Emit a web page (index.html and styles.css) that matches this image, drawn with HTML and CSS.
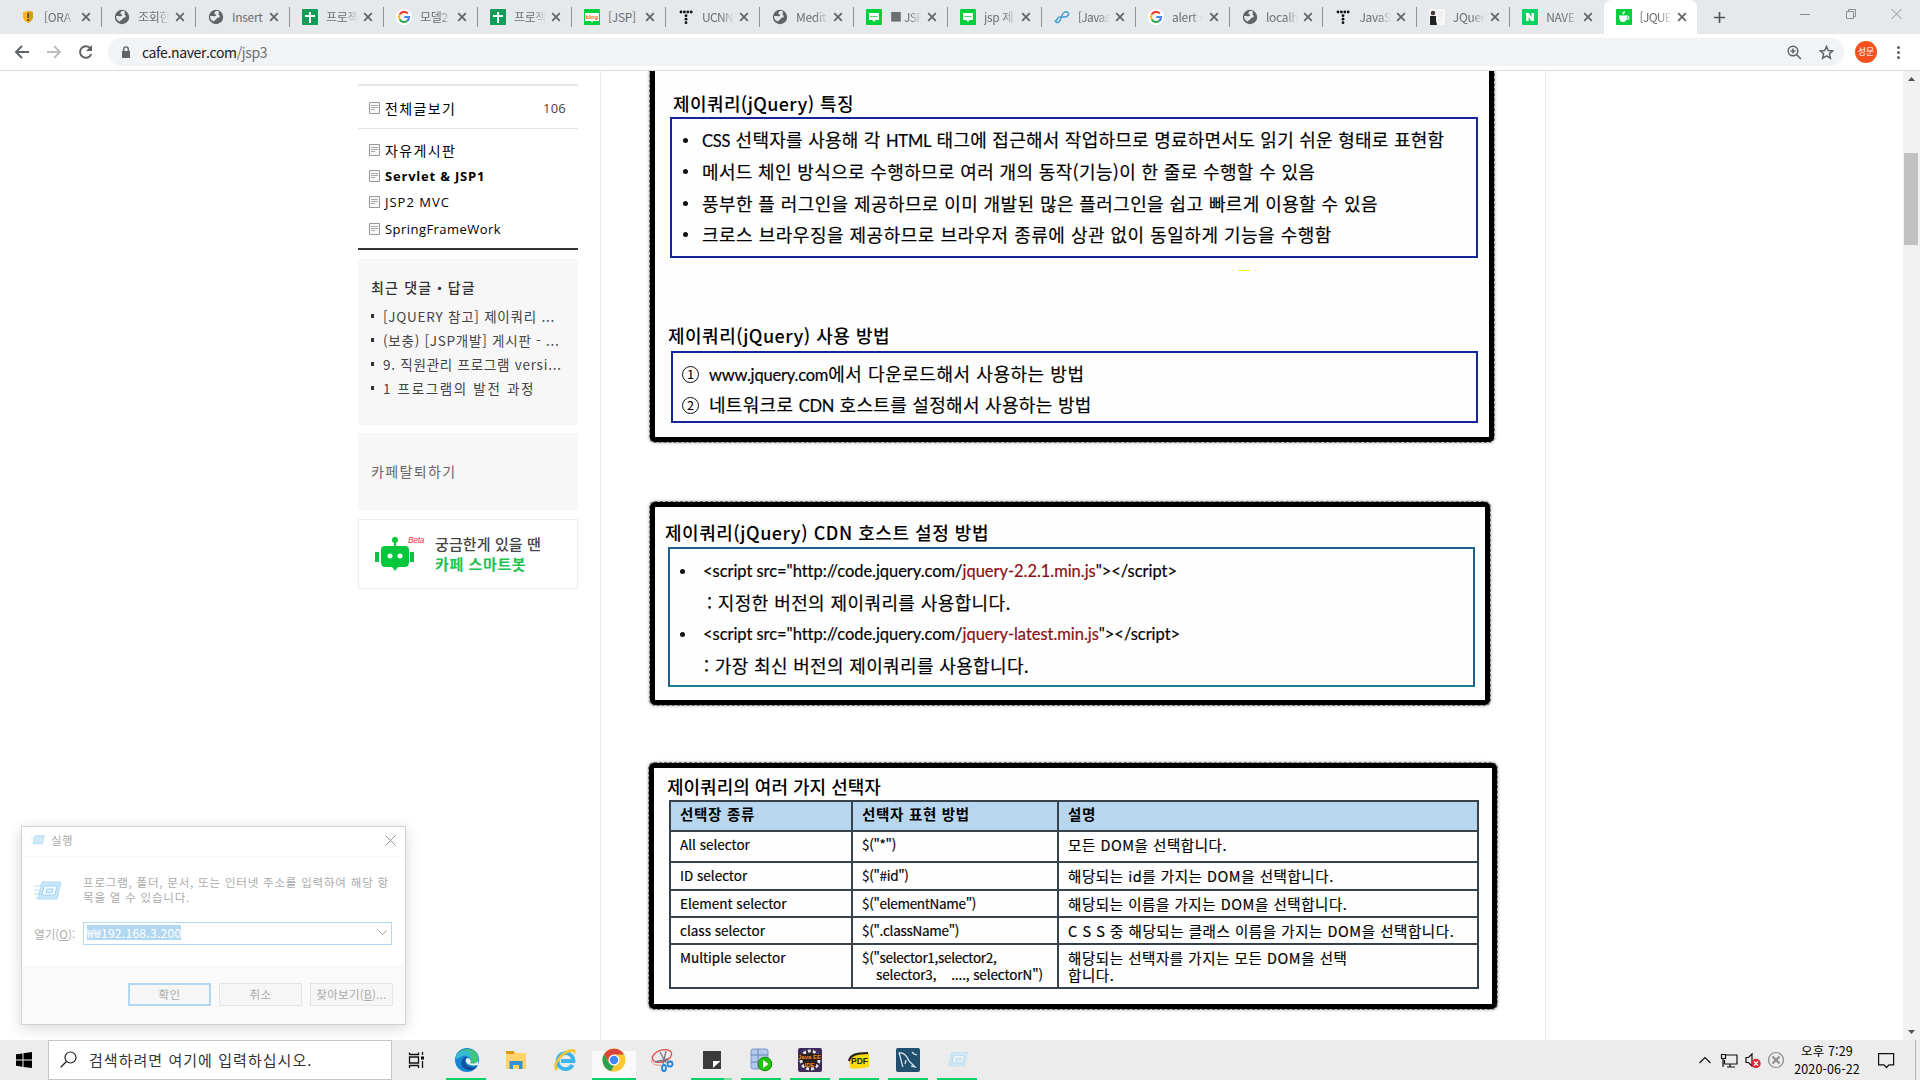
FILE: index.html
```html
<!DOCTYPE html>
<html lang="ko">
<head>
<meta charset="utf-8">
<title>[JQUERY 참고] 제이쿼리</title>
<link rel="stylesheet" href="styles.css">
</head>
<body>
<svg class="defs" aria-hidden="true">
  <symbol id="globe" viewBox="0 0 16 16"><circle cx="8" cy="8" r="7.2" fill="#5f6368"/><path d="M8.5 1.8C6 3 5.6 4.8 7.400 5.600C9 6.200 8.200 7.300 6.300 7.200C4.500 7.300 3.200 6.800 2 7.400C2.100 10.300 4.300 12 6 12.500C6.400 11 8.400 11.200 8.600 9.800C8.800 8.300 11 9 11.800 7.700C12.200 6.600 10.500 6.300 10.600 4.800C10.700 3.600 11 3 11.200 2.700C10.400 2.100 9.400 1.800 8.500 1.800Z" fill="#e6e9ec"/></symbol>
  <symbol id="sheet" viewBox="0 0 16 16"><rect width="16" height="16" rx="1" fill="#0f9d58"/><path d="M7 3h2v3h4v2H9v6H7V8H3V6h4z" fill="#fff"/></symbol>
  <symbol id="google" viewBox="0 0 16 16"><circle cx="8" cy="8" r="8" fill="#fff"/><g fill="none" stroke-width="2.200"><path d="M11.800 4.500A5 5 0 0 0 3.700 5.600" stroke="#ea4335"/><path d="M3.700 5.600A5 5 0 0 0 3.700 10.500" stroke="#fbbc05"/><path d="M3.700 10.500A5 5 0 0 0 11.300 11.800" stroke="#34a853"/><path d="M11.300 11.800A5 5 0 0 0 13 8H8.200" stroke="#4285f4"/></g></symbol>
  <symbol id="tistory" viewBox="0 0 16 16"><g fill="#111"><circle cx="3" cy="3" r="1.400"/><circle cx="6.400" cy="3" r="1.400"/><circle cx="9.800" cy="3" r="1.400"/><circle cx="13.200" cy="3" r="1.400"/><circle cx="8" cy="6.700" r="1.400"/><circle cx="8" cy="10.200" r="1.400"/><circle cx="8" cy="13.700" r="1.400"/></g></symbol>
  <symbol id="chat" viewBox="0 0 16 16"><rect width="16" height="16" rx="1" fill="#03cf3d"/><path d="M3 4h10v7H9.500L8 13 6.500 11H3z" fill="#fff"/><path d="M4.500 7.500h7" stroke="#03cf3d" stroke-dasharray="1.400 .5"/></symbol>
  <symbol id="x" viewBox="0 0 10 10"><path d="M1.200 1.200l7.600 7.600M8.800 1.200L1.200 8.800" stroke="#5f6368" stroke-width="1.700"/></symbol>
  <symbol id="doc" viewBox="0 0 11 12"><path d="M.5.5h10v11H.5z" fill="#f8f8f8" stroke="#999"/><path d="M2 3.500h7M2 5.500h7M2 7.500h4" stroke="#aaa"/></symbol>
  <symbol id="run" viewBox="0 0 28 20"><path d="M0 5h8M0 9h7M0 13h6M1 17h6" stroke="#d5ecfa" stroke-width="1.500"/><path d="M8 1h19l-4 17H4z" fill="#c9e7f9" stroke="#b0d8f1"/><path d="M10 5h13l-2 9H8z" fill="#f2faff" stroke="#a6d2ef"/><path d="M13 8h6l-.8 3.500h-6z" fill="#d9effb" stroke="#a6d2ef"/></symbol>
</svg>

<header class="tabs">
  <div class="tab"><svg class="fav"><path d="M8 2l5 1v6l-2 3-3 2-3-2-2-3V3z" fill="#fbb616"/><path d="M8 2l5 1v6l-2 3-3 2z" fill="#d99a18"/><path d="M7.300 4h1.500v5H7.300zM7.300 10h1.500v2H7.300z" fill="#47413a"/></svg><span>[ORA</span><svg class="cl"><use href="#x"/></svg></div>
  <div class="tab"><svg class="fav"><use href="#globe"/></svg><span>조회한</span><svg class="cl"><use href="#x"/></svg></div>
  <div class="tab"><svg class="fav"><use href="#globe"/></svg><span class="solid">Insert</span><svg class="cl"><use href="#x"/></svg></div>
  <div class="tab"><svg class="fav"><use href="#sheet"/></svg><span>프로젝</span><svg class="cl"><use href="#x"/></svg></div>
  <div class="tab"><svg class="fav"><use href="#google"/></svg><span>모델2</span><svg class="cl"><use href="#x"/></svg></div>
  <div class="tab"><svg class="fav"><use href="#sheet"/></svg><span>프로젝</span><svg class="cl"><use href="#x"/></svg></div>
  <div class="tab"><svg class="fav"><rect width="16" height="16" rx="1" fill="#03cf3d"/><path d="M1 4h14v8H9l-1 2-1-2H1z" fill="#fff"/><text x="1.500" y="9.800" class="blog">blog</text></svg><span class="solid">[JSP]</span><svg class="cl"><use href="#x"/></svg></div>
  <div class="tab"><svg class="fav"><use href="#tistory"/></svg><span class="tight">UCNN</span><svg class="cl"><use href="#x"/></svg></div>
  <div class="tab"><svg class="fav"><use href="#globe"/></svg><span>Medit</span><svg class="cl"><use href="#x"/></svg></div>
  <div class="tab"><svg class="fav"><use href="#chat"/></svg><span class="tight">■ JSP</span><svg class="cl"><use href="#x"/></svg></div>
  <div class="tab"><svg class="fav"><use href="#chat"/></svg><span>jsp 제</span><svg class="cl"><use href="#x"/></svg></div>
  <div class="tab"><svg class="fav"><path d="M1.500 12.500c2 2.500 4.500.5 5.500-3.500s3-7 6-6 1.500 5-2.500 5-6.500-1-7 1.500-3 2-2 3z" fill="none" stroke="#3f9cd4" stroke-width="1.400"/></svg><span class="tight">[Javas</span><svg class="cl"><use href="#x"/></svg></div>
  <div class="tab"><svg class="fav"><use href="#google"/></svg><span>alert -</span><svg class="cl"><use href="#x"/></svg></div>
  <div class="tab"><svg class="fav"><use href="#globe"/></svg><span>localh</span><svg class="cl"><use href="#x"/></svg></div>
  <div class="tab"><svg class="fav"><use href="#tistory"/></svg><span>JavaS</span><svg class="cl"><use href="#x"/></svg></div>
  <div class="tab"><svg class="fav"><rect width="16" height="16" fill="#f7f7f7"/><circle cx="4" cy="4" r="2.300" fill="#4a3a35"/><path d="M1 7h6v4l1 5H1z" fill="#222"/><path d="M9 4h5M9 7h4M9 11h3" stroke="#ddd"/></svg><span>JQuer</span><svg class="cl"><use href="#x"/></svg></div>
  <div class="tab last"><svg class="fav"><rect width="16" height="16" rx="1" fill="#06d460"/><path d="M4 12V4h2.700L9.500 8V4H12v8H9.400L6.600 8v4z" fill="#fff"/></svg><span>NAVE</span><svg class="cl"><use href="#x"/></svg></div>
  <div class="tab active"><svg class="fav"><rect width="16" height="16" rx="1" fill="#03cf3d"/><path d="M3 6.500h8c0 4-1 6.500-4 6.500s-4-2.500-4-6.500z" fill="#fff"/><circle cx="11.300" cy="8.600" r="1.600" fill="none" stroke="#fff" stroke-width="1.200"/><path d="M7 5.500c0-1.500.5-2.500 2-2.500" fill="none" stroke="#fff" stroke-width="1.300"/></svg><span class="tight">[JQUE</span><svg class="cl"><use href="#x"/></svg></div>
  <svg class="plus" viewBox="0 0 14 14"><path d="M7 1v12M1 7h12" stroke="#50545a" stroke-width="1.800"/></svg>
  <svg class="winctl" viewBox="0 0 102 12"><path d="M0 6.500h10M46.500 3.500h7v7h-7zM48.500 3.500v-2h7v7h-2M91.500 1l10 10M101.500 1l-10 10" fill="none" stroke="#8a8d91"/></svg>
</header>

<div class="toolbar">
  <svg class="nav" viewBox="0 0 80 16"><g fill="none" stroke-width="2"><path d="M15 8H2M8 2L2 8l6 6" stroke="#5f6368"/><path d="M33 8h13M40 2l6 6-6 6" stroke="#bbbec1"/><path d="M76.500 4.500A5.800 5.800 0 1 0 77.300 10" stroke="#5f6368"/></g><path d="M78 1v6h-6z" fill="#5f6368"/></svg>
  <div class="omni">
    <svg class="lock" viewBox="0 0 10 13"><path d="M1 5h8v7H1z" fill="#5f6368"/><path d="M2.700 5V3.200a2.300 2.300 0 0 1 4.600 0V5" fill="none" stroke="#5f6368" stroke-width="1.400"/></svg>
    <span class="url">cafe.naver.com<i>/jsp3</i></span>
    <svg class="omi" viewBox="0 0 15 15"><g fill="none" stroke="#5f6368" stroke-width="1.500"><circle cx="6" cy="6" r="4.800"/><path d="M9.500 9.500l4.500 4.500M3.500 6h5M6 3.500v5"/></g></svg>
    <svg class="omi" viewBox="0 0 15 15"><path d="M7.500 1.500l1.800 4 4.400.4-3.300 2.900 1 4.300-3.900-2.300-3.900 2.300 1-4.300L1.300 5.900l4.400-.4z" fill="none" stroke="#5f6368" stroke-width="1.500"/></svg>
  </div>
  <span class="avatar">성문</span>
  <span class="dots"></span>
</div>

<main class="page">
  <aside class="side">
    <div class="all"><svg class="doc"><use href="#doc"/></svg><span>전체글보기</span><em>106</em></div>
    <ul class="menu">
      <li><svg class="doc"><use href="#doc"/></svg><span>자유게시판</span></li>
      <li><svg class="doc"><use href="#doc"/></svg><b>Servlet &amp; JSP1</b></li>
      <li><svg class="doc"><use href="#doc"/></svg><span class="lat wide">JSP2 MVC</span></li>
      <li><svg class="doc"><use href="#doc"/></svg><span class="lat">SpringFrameWork</span></li>
    </ul>
    <section class="recent">
      <h3>최근 댓글・답글</h3>
      <ul><li>[JQUERY 참고] 제이쿼리 ...</li><li>(보충) [JSP개발] 게시판 - ...</li><li>9. 직원관리 프로그램 versi...</li><li class="r4">1 프로그램의 발전 과정</li></ul>
    </section>
    <section class="leave">카페탈퇴하기</section>
    <section class="bot">
      <svg class="robot" viewBox="0 0 52 38"><g fill="#03c83c"><circle cx="21" cy="5" r="3"/><path d="M20 6h2v6h-2zM1 17h4v10H1zM36 17h4v10h-4z"/><path d="M11 11h20q4 0 4 4v12q0 5-4 5h-7l-3 4-3-4h-7q-4 0-4-5V15q0-4 4-4z"/></g><circle cx="16" cy="21" r="2.500" fill="#fff"/><circle cx="26" cy="21" r="2.500" fill="#fff"/><text x="34" y="8" class="beta">Beta</text></svg>
      <p>궁금한게 있을 땐<strong>카페 스마트봇</strong></p>
    </section>
  </aside>

  <article class="post">
    <section class="slide s1">
      <h2 class="h-a">제이쿼리(jQuery) 특징</h2>
      <ul class="box b1">
        <li class="l1"><p><span class="la">CSS</span> 선택자를 사용해 각 <span class="la">HTML</span> 태그에 접근해서 작업하므로 명료하면서도 읽기 쉬운 형태로 표현함</p></li>
        <li class="l2"><p>메서드 체인 방식으로 수행하므로 여러 개의 동작(기능)이 한 줄로 수행할 수 있음</p></li>
        <li class="l3"><p>풍부한 플 러그인을 제공하므로 이미 개발된 많은 플러그인을 쉽고 빠르게 이용할 수 있음</p></li>
        <li class="l4"><p>크로스 브라우징을 제공하므로 브라우저 종류에 상관 없이 동일하게 기능을 수행함</p></li>
      </ul>
      <i class="spot"></i>
      <h2 class="h-b">제이쿼리(jQuery) 사용 방법</h2>
      <ol class="box b2">
        <li class="l5"><i>1</i><p><span class="la">www.jquery.com</span>에서 다운로드해서 사용하는 방법</p></li>
        <li class="l6"><i>2</i><p>네트워크로 <span class="la">CDN</span> 호스트를 설정해서 사용하는 방법</p></li>
      </ol>
    </section>

    <section class="slide s2">
      <h2 class="h-c">제이쿼리(jQuery) CDN 호스트 설정 방법</h2>
      <ul class="box b3">
        <li class="code"><p>&lt;script src="http://code.jquery.com/<mark>jquery-2.2.1.min.js</mark>"&gt;&lt;/script&gt;</p></li>
        <li class="note n1"><p>: 지정한 버전의 제이쿼리를 사용합니다.</p></li>
        <li class="code"><p>&lt;script src="http://code.jquery.com/<mark>jquery-latest.min.js</mark>"&gt;&lt;/script&gt;</p></li>
        <li class="note n2"><p>: 가장 최신 버전의 제이쿼리를 사용합니다.</p></li>
      </ul>
    </section>

    <section class="slide s3">
      <h2 class="h-d">제이쿼리의 여러 가지 선택자</h2>
      <table>
        <colgroup><col class="c1"><col class="c2"><col class="c3"></colgroup>
        <tr class="r30"><th>선택장 종류</th><th>선택자 표현 방법</th><th>설명</th></tr>
        <tr class="r31"><td>All selector</td><td>$("*")</td><td>모든 DOM을 선택합니다.</td></tr>
        <tr class="r28"><td>ID selector</td><td>$("#id")</td><td>해당되는 id를 가지는 DOM을 선택합니다.</td></tr>
        <tr class="r27"><td>Element selector</td><td>$("elementName")</td><td>해당되는 이름을 가지는 DOM을 선택합니다.</td></tr>
        <tr class="r27"><td>class selector</td><td>$(".className")</td><td>C S S 중 해당되는 클래스 이름을 가지는 DOM을 선택합니다.</td></tr>
        <tr class="r44"><td>Multiple selector</td><td>$("selector1,selector2,<br><span class="ind">selector3, &nbsp; &nbsp;...., selectorN")</span></td><td>해당되는 선택자를 가지는 모든 DOM을 선택<br>합니다.</td></tr>
      </table>
    </section>
  </article>

  <div class="scroll"><svg viewBox="0 0 17 17"><path d="M5 10h7L8.500 6z" fill="#505050"/></svg><i></i><svg viewBox="0 0 17 17"><path d="M5 7h7l-3.500 4z" fill="#505050"/></svg></div>

  <div class="dialog">
    <div class="dt"><svg class="ri"><use href="#run"/></svg><span>실행</span><svg class="dx" viewBox="0 0 11 11"><path d="M.5.5l10 10M10.500.5l-10 10" stroke="#999"/></svg></div>
    <div class="db">
      <div class="dmsg"><svg class="rb"><use href="#run"/></svg><p>프로그램, 폴더, 문서, 또는 인터넷 주소를 입력하여 해당 항<br>목을 열 수 있습니다.</p></div>
      <div class="dopen"><label>열기(<u>O</u>):</label><div class="combo"><span>₩₩192.168.3.200</span><svg viewBox="0 0 9 6"><path d="M.5.5l4 4 4-4" fill="none" stroke="#999"/></svg></div></div>
    </div>
    <div class="df"><button class="ok">확인</button><button>취소</button><button>찾아보기(<u>B</u>)...</button></div>
  </div>
</main>

<footer class="taskbar">
  <div class="start"><svg viewBox="0 0 16 16"><path d="M0 2.300L6.500 1.400V7.500H0zM7.500 1.200L16 0v7.500H7.500zM0 8.500h6.500v6.200L0 13.800zM7.500 8.500H16V16l-8.500-1.100z"/></svg></div>
  <div class="search"><svg viewBox="0 0 17 17"><circle cx="10.500" cy="6.500" r="5.500" fill="none" stroke="#222" stroke-width="1.200"/><path d="M6.500 10.500L.7 16.300" stroke="#222" stroke-width="1.300"/></svg><span>검색하려면 여기에 입력하십시오.</span></div>
  <div class="task tv"><svg viewBox="0 0 18 18"><path d="M2.500 4V1.500M2.500 3.500h9V1.500M2.500 14.500h9v2.500M2.500 14v3M2.500 6h9v6h-9zM15.500 1v3M15.500 10v7" fill="none" stroke="#111" stroke-width="1.300"/><path d="M14 5.500h3v3h-3z"/></svg></div>
  <div class="task on"><svg viewBox="0 0 24 24"><circle cx="12" cy="12" r="12" fill="#1685d3"/><path d="M1 9C3 0 19-3 23 8c2 6-3 9-8 7 2-4 0-8-5-8C5 7 2 8 1 9z" fill="#40c67c"/><path d="M1 9c2-5 7-7 12-6 3 2 3 6 2 8-1-3-4-4-7-3-4 1-6 5-7 1z" fill="#36bbd5"/><path d="M10 9c-6 4-4 12 3 13 4 1 8-1 9-4-5 3-12 0-12-5 0-2 1-3 3-4z" fill="#104f9e"/><path d="M12 10c-4 4 2 9 11 7v-4c-2 3-6 3-8 2 2-2 0-5-3-5z" fill="#eaf5ef"/></svg></div>
  <div class="task"><svg viewBox="0 0 24 24"><path d="M2 3h8l2 2h10v16H2z" fill="#ffd367"/><path d="M2 3h8v3H2z" fill="#d99a10"/><path d="M5.500 21v-8h13v8H15v-4H9v4z" fill="#3490d4"/></svg></div>
  <div class="task"><svg viewBox="0 0 24 24"><path d="M19.500 17A8 8 0 1 1 20.500 13H8" fill="none" stroke="#3db5ea" stroke-width="3.800"/><path d="M3 22.500C-3 18 8 1.500 20 1c3.500 0 3 3.500 1.500 6.500C22 2 17 3 12 6.500 6 11 1 18.500 5.500 20.500z" fill="#f4c430"/></svg></div>
  <div class="task on cur"><svg viewBox="0 0 24 24"><circle cx="12" cy="12" r="11.500" fill="#fcc934"/><path d="M2 6.500A11.500 11.500 0 0 1 22 6.500H12L7 14z" fill="#d9453a"/><path d="M2 6.300l5 8.700 5 2.500-3 5.600A11.500 11.500 0 0 1 2 6.300z" fill="#2da04f"/><circle cx="12" cy="12" r="5.500" fill="#fff"/><circle cx="12" cy="12" r="4.200" fill="#4285f4"/></svg></div>
  <div class="task"><svg viewBox="0 0 24 24"><ellipse cx="11" cy="8" rx="10" ry="5.800" fill="none" stroke="#e24b4b" stroke-width="1.300" transform="rotate(-18 11 8)"/><path d="M9 4l6 11M15 3l-3 13M4 14l13-3" stroke="#778" stroke-width="1.300"/><ellipse cx="13" cy="20" rx="2" ry="3" fill="none" stroke="#2781cf" stroke-width="1.800"/><circle cx="19" cy="16" r="2.500" fill="none" stroke="#2781cf" stroke-width="1.800"/><path d="M0 12c1 4 5 6 10 5" stroke="#e88" fill="none"/></svg></div>
  <div class="task on part"><svg viewBox="0 0 24 24"><path d="M3 3h18v18H3z" fill="#3b3b3b"/><path d="M13 20v-7h7.500z" fill="#fff"/></svg></div>
  <div class="task on"><svg viewBox="0 0 24 24"><rect x="2" y="1" width="17" height="20" rx="2" fill="#b0c9ec" stroke="#7d9bcb"/><path d="M2 7h17M2 14h17M9 1v20" stroke="#6986b8"/><circle cx="16" cy="16" r="6.800" fill="#1fc40b" stroke="#138305"/><path d="M14 12l5.500 4-5.500 4z" fill="#fff"/></svg></div>
  <div class="task on"><svg viewBox="0 0 24 24"><rect width="24" height="24" rx="2" fill="#3c2b58"/><circle cx="12" cy="12" r="9" fill="#2b2020" stroke="#ddd" stroke-width="3" stroke-dasharray="3 2"/><path d="M1 6h22v6H1zM6 12h12v6H6z" fill="#2b2020"/><text x="0" y="10.500" class="ee">Java EE</text><text x="6.500" y="18.500" class="ee">IDE</text></svg></div>
  <div class="task on"><svg viewBox="0 0 24 24"><path d="M2 12C4 5 9 4 22 5v14c-9 2-15 2-19 1z" fill="#fcd90b"/><path d="M2 13C3 7 9 5 21 5" fill="none" stroke="#222" stroke-width="2"/><text x="4" y="16" class="pdf">PDF</text></svg></div>
  <div class="task on"><svg viewBox="0 0 24 24"><rect width="24" height="24" rx="2" fill="#21506f"/><path d="M7 19C5 15 5 9 3 5c5-1 8 3 10 8l6 6-4-1M9 16l1-4M16 4l2 2 3 1" fill="none" stroke="#e4f0f5" stroke-width="1.200"/></svg></div>
  <div class="task on"><svg viewBox="0 0 28 28"><use href="#run" width="26" height="19" x="1" y="4" opacity=".8"/></svg></div>
  <div class="tray">
    <svg class="t1" viewBox="0 0 86 20"><g fill="none" stroke="#111" stroke-width="1.200"><path d="M.5 13L6 7.500 11.500 13"/><path d="M26 5h12v9H25.500v-4M31 14v3M28 17h8M22.500 4.500h4v4h-4zM24 9v8"/><path d="M47 7.500h2.500L53 4v12l-3.500-3.500H47z"/></g><circle cx="57" cy="13.500" r="4.700" fill="#dd2635"/><path d="M55 11.500l4 4M59 11.500l-4 4" stroke="#fff" stroke-width="1.300"/><circle cx="77" cy="10" r="7.500" fill="none" stroke="#8b8b8b" stroke-width="1.200"/><path d="M73.500 6.500l7 7M80.500 6.500l-7 7" stroke="#8b8b8b" stroke-width="2"/></svg>
    <div class="clock"><span>오후 7:29</span><span>2020-06-22</span></div>
    <svg class="note-i" viewBox="0 0 17 17"><path d="M.6 1.600h15v11.200H11L8.500 15.500 6 12.800H.6z" fill="none" stroke="#111" stroke-width="1.200"/></svg>
  </div>
</footer>
</body>
</html>
```
FILE: styles.css
```css
* { box-sizing: border-box; }
html, body { margin: 0; height: 100%; overflow: hidden; }
body { display: flex; flex-direction: column; background: #fff; color: #000; font: 13px "Open Sans", "Noto Sans CJK KR", sans-serif; }
ul, ol, p, h2, h3 { margin: 0; padding: 0; list-style: none; }
svg { flex: none; display: block; }
i, em { font-style: normal; }
.defs { width: 0; height: 0; position: absolute; }

/* tab strip */
.tabs { height: 34px; flex: none; display: flex; align-items: center; background: #e6e9ec; padding-left: 8px; }
.tab { width: 94px; height: 34px; flex: none; display: flex; align-items: center; padding-left: 12px; position: relative; color: #6b6f73; }
.tab:nth-child(n+14) { width: 93.400px; }
.tab::after { content: ""; position: absolute; right: 0; top: 7px; height: 20px; border-right: 1px solid #8f9296; }
.tab.last::after, .tab.active::after { display: none; }
.tab.active { background: #fff; border-radius: 8px 8px 0 0; }
.fav { width: 16px; height: 16px; }
.tab span { width: 32px; margin: 0 5px 0 8px; overflow: hidden; white-space: nowrap; font: 12px/18px "Noto Sans CJK KR", sans-serif; letter-spacing: -.3px; -webkit-mask-image: linear-gradient(90deg, #000 60%, transparent); mask-image: linear-gradient(90deg, #000 60%, transparent); }
.tab .solid { -webkit-mask-image: none; mask-image: none; }
.tab .tight { letter-spacing: -.7px; }
.cl { width: 10px; height: 10px; }
.blog { font: bold 6px "Liberation Sans", sans-serif; fill: #f60; }
.plus { width: 13px; height: 13px; margin-left: 16px; }
.winctl { width: 102px; height: 12px; margin: -6px 18px 0 auto; }

/* toolbar */
.toolbar { height: 37px; flex: none; display: flex; align-items: center; padding-left: 14px; border-bottom: 1px solid #d9dadc; }
.nav { width: 80px; height: 16px; }
.omni { margin-left: 14px; width: 1736px; height: 28px; border-radius: 14px; background: #f1f3f4; display: flex; align-items: center; padding: 0 10px 0 13px; }
.lock { width: 10px; height: 13px; }
.url { margin: 0 auto 0 11px; font: 14px "Noto Sans CJK KR", sans-serif; letter-spacing: -.38px; color: #202124; }
.url i { color: #6b6f73; }
.omi { width: 15px; height: 15px; margin-left: 17px; }
.avatar { width: 22px; height: 22px; margin-left: 11px; border-radius: 50%; background: #f4511e; color: #fff; font: 9px/21px "Noto Sans CJK KR", sans-serif; text-align: center; }
.dots { width: 3px; height: 3px; margin-left: 20px; border-radius: 50%; background: #5f6368; box-shadow: 0 -5px #5f6368, 0 5px #5f6368; }

/* page */
.page { height: 969px; flex: none; display: flex; position: relative; overflow: hidden; padding-left: 358px; }
.side { width: 220px; flex: none; padding-top: 13px; font-family: "Noto Sans CJK KR", sans-serif; font-size: 14px; letter-spacing: 1.350px; }
.all { height: 45px; display: flex; align-items: center; border-top: 2px solid #e5e5e5; border-bottom: 1px solid #e5e5e5; padding: 2px 12px 0 11px; }
.all em { margin-left: auto; color: #444; font: 13px "Open Sans", sans-serif; letter-spacing: .2px; }
.doc { width: 11px; height: 12px; margin-right: 5px; }
.menu { height: 121px; border-bottom: 2px solid #333; padding: 8px 11px 0; }
.menu li { height: 26.200px; display: flex; align-items: center; }
.menu b { font: bold 13px "Open Sans", sans-serif; letter-spacing: .8px; }
.lat { font: 13px "Open Sans", sans-serif; letter-spacing: .45px; }
.wide { letter-spacing: 1px; }
.recent { margin-top: 9px; height: 166px; background: #f7f7f7; padding: 17px 0 0 13px; }
.recent h3 { font-size: 14px; line-height: 23px; font-weight: 500; color: #333; letter-spacing: 1.200px; }
.recent ul { padding-top: 5px; color: #444; font: 13.500px "Noto Sans CJK KR", sans-serif; letter-spacing: .75px; }
.recent .r4 { letter-spacing: 1.650px; }
.recent li { height: 24px; line-height: 24px; display: flex; align-items: center; white-space: nowrap; }
.recent li::before { content: ""; width: 3px; height: 4px; margin-right: 9px; background: #333; }
.leave { margin-top: 8px; height: 77px; line-height: 77px; background: #f7f7f7; padding-left: 13px; color: #666; }
.bot { margin-top: 9px; height: 70px; border: 1px solid #eee; display: flex; align-items: center; padding-left: 15px; }
.robot { width: 52px; height: 38px; }
.beta { font: italic 8.500px "Liberation Sans", sans-serif; fill: #f0364a; letter-spacing: -.3px; }
.bot p { margin-left: 9px; font-size: 15px; line-height: 20px; font-weight: 500; letter-spacing: .1px; color: #444; }
.bot strong { display: block; color: #1ec252; letter-spacing: .6px; }

.post { width: 946px; flex: none; margin-left: 22px; border: solid #e9e9ee; border-width: 0 1px; padding-left: 49px; font-family: "Noto Sans CJK KR", sans-serif; }
.slide { position: relative; border: 5px solid #000; border-radius: 5px; background: #fefefe; box-shadow: 0 0 3px 1px rgba(0,0,0,.3); }
.slide::before { content: ""; position: absolute; inset: -6px; border: 1px dashed rgba(20,20,20,.5); border-radius: 6px; }
.slide h2 { font-size: 18px; line-height: 26px; font-weight: 500; white-space: nowrap; }
.box { border: 2px solid #14259c; font-size: 18px; white-space: nowrap; -webkit-text-stroke: .2px #111; }
.box li { height: 31.300px; line-height: 31.300px; display: flex; align-items: center; }
.box li::before { content: ""; flex: none; width: 5px; height: 5px; border-radius: 50%; background: #111; margin: 0 14px 0 11px; }
.la { font-family: Lato, sans-serif; font-size: 16.500px; letter-spacing: -.2px; }

.s1 { width: 844px; height: 371px; border-top: 0; border-radius: 0 0 5px 5px; padding: 19px 0 0 15px; }
.h-a { padding-left: 3px; letter-spacing: .4px; }
.b1 { width: 808px; height: 141px; padding-top: 6px; margin-top: 1px; }
.h-b { margin-top: 64px; margin-left: -2px; letter-spacing: .5px; }
.b2 { width: 807px; height: 72px; margin: 3px 0 0 1px; padding-top: 6px; }
.b2 li { height: 31px; }
.b2 li::before { display: none; }
.b2 i { width: 17px; height: 17px; border: 1.500px solid #111; border-radius: 50%; margin: 0 10px 0 9px; font-size: 12px; line-height: 14px; text-align: center; letter-spacing: 0; }
.spot { position: absolute; left: 583px; top: 199px; width: 12px; height: 1px; background: #ff0; }
.l1 { letter-spacing: .25px; } .l2 { letter-spacing: .35px; } .l3 { letter-spacing: .4px; } .l4 { letter-spacing: .5px; }
.l5 { letter-spacing: .55px; } .l6 { letter-spacing: .3px; }

.s2 { width: 840px; height: 203px; margin-top: 60px; padding: 12px 0 0 10px; }
.h-c { letter-spacing: .53px; }
.b3 { width: 807px; height: 140px; margin: 2px 0 0 3px; padding-top: 7px; border-color: #20608f; border-bottom-color: #15808f; }
.b3 .code { font-family: Lato, sans-serif; font-size: 16.500px; letter-spacing: -.04px; }
.b3 .code::before { margin: 0 18px 0 10px; }
.b3 mark { background: none; color: #8b0f14; -webkit-text-stroke: .2px #8b0f14; }
.b3 .note { letter-spacing: .4px; padding-left: 37px; }
.b3 .n2 { padding-left: 34px; letter-spacing: .35px; }
.b3 .note::before { display: none; }

.s3 { width: 848px; height: 246px; margin: 58px 0 0 -1px; padding: 5px 0 0 14px; }
.h-d { letter-spacing: 0; margin-left: -1px; }
table { margin: 1px 0 0 1px; width: 808px; border-collapse: collapse; table-layout: fixed; font-size: 13.500px; line-height: 17px; -webkit-text-stroke: .2px #111; }
.c1 { width: 182px; } .c2 { width: 206px; } .c3 { width: 420px; }
th, td { border: 2px solid #36424c; padding: 0 0 0 9px; text-align: left; vertical-align: middle; white-space: nowrap; }
td:nth-child(2) { letter-spacing: -.3px; }
td:nth-child(3) { font-size: 14.500px; letter-spacing: .55px; }
th { background: #b9d6ef; font-size: 14.500px; letter-spacing: .7px; font-weight: 700; padding-bottom: 6px; -webkit-text-stroke: 0; }
.r30 { height: 30px; } .r31 { height: 31px; } .r28 { height: 28px; } .r27 { height: 27px; } .r44 { height: 44px; }
.r31 td { padding-bottom: 4px; }
.r28 td { padding-bottom: 2px; }
.r44 td { vertical-align: top; padding-top: 4px; }
.ind { padding-left: 14px; letter-spacing: -.1px; }

.scroll { width: 17px; height: 969px; position: absolute; right: 0; top: 0; background: #f1f1f1; display: flex; flex-direction: column; }
.scroll svg { width: 17px; height: 17px; }
.scroll i { height: 92px; margin: 65px 2px auto 1px; background: #c1c1c1; }

/* run dialog floating over the page */
.dialog { position: absolute; left: 21px; top: 755px; width: 385px; height: 199px; border: 1px solid #d3d3d3; background: #fff; box-shadow: 0 3px 14px rgba(0,0,0,.16); display: flex; flex-direction: column; color: #aaa; font: 11.500px "Noto Sans CJK KR", sans-serif; letter-spacing: .45px; }
.dt { height: 30px; display: flex; align-items: center; padding: 0 9px 3px; border-bottom: 1px solid #f8f8f8; }
.ri { width: 14px; height: 10px; margin-right: 6px; }
.dx { width: 11px; height: 11px; margin-left: auto; }
.db { height: 108px; }
.dmsg { display: flex; align-items: center; padding: 18px 0 0 12px; }
.dmsg p { margin-left: 21px; line-height: 14.500px; white-space: nowrap; letter-spacing: .8px; }
.rb { width: 28px; height: 20px; margin-top: 3px; }
.dopen { display: flex; align-items: center; margin-top: 18px; padding-left: 12px; }
.dopen label { width: 49px; letter-spacing: .1px; }
.combo { width: 309px; height: 23px; border: 1px solid #b2d9f5; display: flex; align-items: center; padding: 0 4px 2px 3px; }
.combo span { background: #b2d7f3; color: #fff; line-height: 15px; letter-spacing: .3px; font-size: 12px; }
.combo svg { width: 9px; height: 6px; margin-left: auto; }
.df { flex: 1; background: #fafafa; display: flex; gap: 8px; padding: 18px 0 0 106px; }
.df button { width: 83px; height: 23px; padding: 0; border: 1px solid #e4e4e4; background: #f6f6f6; color: #aaa; font: inherit; letter-spacing: .3px; line-height: 19px; white-space: nowrap; }
.df .ok { border: 2px solid #b2d7f3; }

/* taskbar */
.taskbar { height: 40px; flex: none; display: flex; background: #ececec; font-family: "Noto Sans CJK KR", sans-serif; }
.start { width: 48px; padding: 12px 16px; }
.start svg { width: 16px; height: 16px; }
.search { width: 344px; border: 1px solid #c6c6c6; background: #fff; display: flex; align-items: center; padding: 0 0 2px 11px; }
.search svg { width: 17px; height: 17px; }
.search span { margin-left: 12px; font-size: 15px; letter-spacing: 1.040px; color: #333; }
.task { width: 49.100px; display: flex; align-items: center; justify-content: center; position: relative; }
.task svg { width: 24px; height: 24px; }
.task.tv { width: 50px; padding-right: 2px; }
.tv svg { width: 18px; height: 18px; }
.on::after { content: ""; position: absolute; bottom: 0; left: 4px; right: 5px; height: 2px; background: #08cf68; }
.cur::before { content: ""; position: absolute; inset: 11px 2px 0 3px; background: #f9f9f9; }
.cur::after { left: 3px; right: 2px; }
.cur svg { position: relative; }
.part::after { background: linear-gradient(90deg, #08cf68 80%, #7adfa8 80%); }
.ee { font: bold 6px "Liberation Sans", sans-serif; fill: #f58a20; }
.pdf { font: bold 8.500px "Liberation Sans", sans-serif; fill: #222; }
.tray { margin-left: auto; width: 221px; display: flex; align-items: center; border-right: 1px solid #b5b5b5; margin-right: 4px; }
.t1 { width: 86px; height: 20px; margin-left: 4px; }
.clock { width: 78px; margin-left: 3px; display: flex; flex-direction: column; align-items: center; font-size: 12.500px; line-height: 18px; letter-spacing: .15px; white-space: nowrap; padding-bottom: 1px; }
.note-i { width: 17px; height: 17px; margin-left: 12px; }
```
